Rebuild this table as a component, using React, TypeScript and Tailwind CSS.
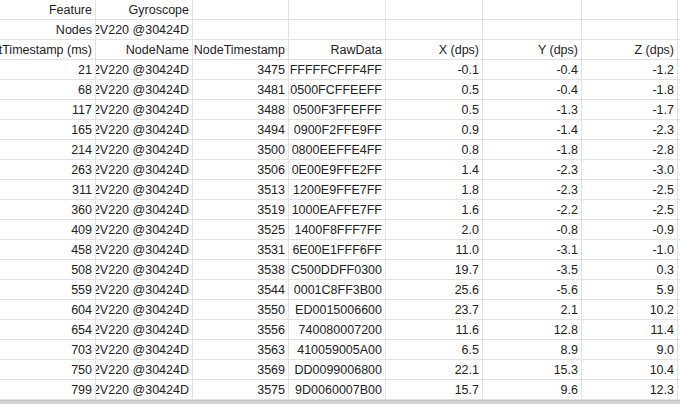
const widths = ["w-[96px]", "w-[97px]", "w-[96px]", "w-[97px]", "w-[97px]", "w-[99px]", "w-[96px]"]

const node = "22V220 @30424D"

const rows: string[][] = [
  ["Feature", "Gyroscope", "", "", "", "", ""],
  ["Nodes", node, "", "", "", "", ""],
  ["HostTimestamp (ms)", "NodeName", "NodeTimestamp", "RawData", "X (dps)", "Y (dps)", "Z (dps)"],
  ["21", node, "3475", "FFFFFCFFF4FF", "-0.1", "-0.4", "-1.2"],
  ["68", node, "3481", "0500FCFFEEFF", "0.5", "-0.4", "-1.8"],
  ["117", node, "3488", "0500F3FFEFFF", "0.5", "-1.3", "-1.7"],
  ["165", node, "3494", "0900F2FFE9FF", "0.9", "-1.4", "-2.3"],
  ["214", node, "3500", "0800EEFFE4FF", "0.8", "-1.8", "-2.8"],
  ["263", node, "3506", "0E00E9FFE2FF", "1.4", "-2.3", "-3.0"],
  ["311", node, "3513", "1200E9FFE7FF", "1.8", "-2.3", "-2.5"],
  ["360", node, "3519", "1000EAFFE7FF", "1.6", "-2.2", "-2.5"],
  ["409", node, "3525", "1400F8FFF7FF", "2.0", "-0.8", "-0.9"],
  ["458", node, "3531", "6E00E1FFF6FF", "11.0", "-3.1", "-1.0"],
  ["508", node, "3538", "C500DDFF0300", "19.7", "-3.5", "0.3"],
  ["559", node, "3544", "0001C8FF3B00", "25.6", "-5.6", "5.9"],
  ["604", node, "3550", "ED0015006600", "23.7", "2.1", "10.2"],
  ["654", node, "3556", "740080007200", "11.6", "12.8", "11.4"],
  ["703", node, "3563", "410059005A00", "6.5", "8.9", "9.0"],
  ["750", node, "3569", "DD0099006800", "22.1", "15.3", "10.4"],
  ["799", node, "3575", "9D0060007B00", "15.7", "9.6", "12.3"],
]

function Cell({ text, w }: { text: string; w: string }) {
  return (
    <div
      className={`${w} h-full shrink-0 flex items-end justify-end overflow-hidden whitespace-nowrap border-r border-[#e2e2e2] pr-[3px] pb-[1px]`}
    >
      <span className="leading-[16px]">{text}</span>
    </div>
  )
}

export default function App() {
  return (
    <div
      className="w-[680px] h-[404px] overflow-hidden bg-white text-[12.5px] text-[#222222] flex flex-col"
      style={{ fontFamily: '"Liberation Sans", Arial, sans-serif' }}
    >
      {rows.map((r, i) => (
        <div key={i} className="h-[20px] shrink-0 flex border-b border-[#e2e2e2]">
          {r.map((t, j) => (
            <Cell key={j} text={t} w={widths[j]} />
          ))}
        </div>
      ))}
      <div className="flex-1 bg-[#d4d4d4] border-t border-[#c2c2c2]" />
    </div>
  )
}
